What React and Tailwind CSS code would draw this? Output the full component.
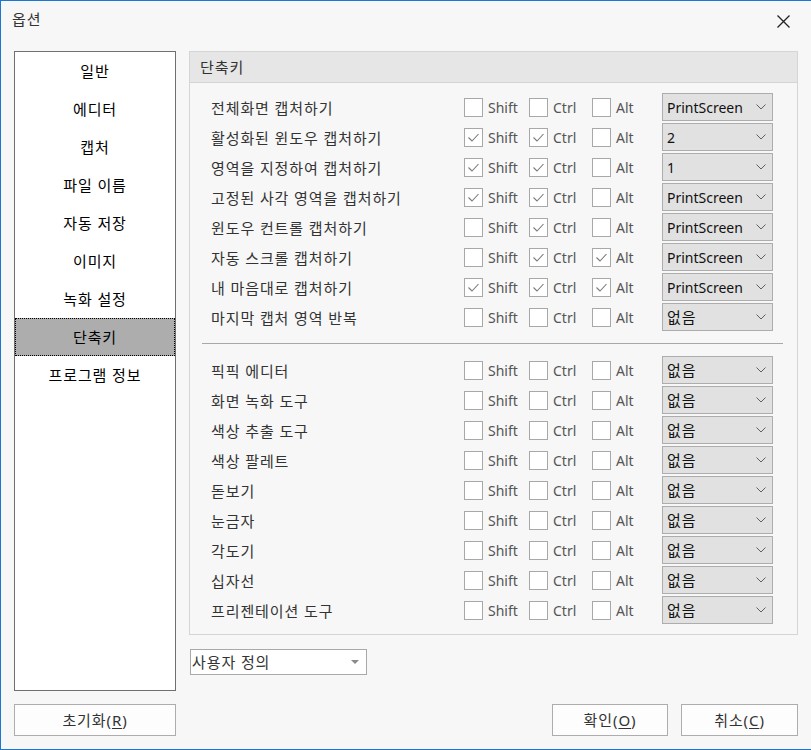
import React from "react";

const top = [
  ["전체화면 캡처하기", false, false, false, "PrintScreen"],
  ["활성화된 윈도우 캡처하기", true, true, false, "2"],
  ["영역을 지정하여 캡처하기", true, true, false, "1"],
  ["고정된 사각 영역을 캡처하기", true, true, false, "PrintScreen"],
  ["윈도우 컨트롤 캡처하기", false, true, false, "PrintScreen"],
  ["자동 스크롤 캡처하기", false, true, true, "PrintScreen"],
  ["내 마음대로 캡처하기", true, true, true, "PrintScreen"],
  ["마지막 캡처 영역 반복", false, false, false, "없음"],
];

const bottom = [
  "픽픽 에디터",
  "화면 녹화 도구",
  "색상 추출 도구",
  "색상 팔레트",
  "돋보기",
  "눈금자",
  "각도기",
  "십자선",
  "프리젠테이션 도구",
].map((l) => [l, false, false, false, "없음"]);

const menu = ["일반", "에디터", "캡처", "파일 이름", "자동 저장", "이미지", "녹화 설정", "단축키", "프로그램 정보"];

function Check({ checked }) {
  return (
    <div className="w-[19px] h-[19px] border border-[#a8a8a8] bg-white shrink-0 flex items-center justify-center">
      {checked && (
        <svg width="17" height="17" viewBox="0 0 17 17">
          <polyline points="3.5,8.5 7,12 13.5,5" fill="none" stroke="#7a7a7a" strokeWidth="1.1" />
        </svg>
      )}
    </div>
  );
}

function Opt({ checked, label, w }) {
  return (
    <div className={"flex items-center gap-[5px] " + w}>
      <Check checked={checked} />
      <span className="text-[#555] text-[14px] tracking-normal leading-[20px] pt-[2px]">{label}</span>
    </div>
  );
}

function Row({ r }) {
  const [label, s, c, a, key] = r;
  const latin = /^[A-Za-z0-9]/.test(key);
  return (
    <div className="h-[30px] flex items-center">
      <div className="w-[274px] pl-[21px] text-[#333] leading-[20px] whitespace-nowrap pt-[1px]">{label}</div>
      <Opt checked={s} label="Shift" w="w-[65px]" />
      <Opt checked={c} label="Ctrl" w="w-[63px]" />
      <Opt checked={a} label="Alt" w="w-[70px]" />
      <div className="w-[111px] h-[28px] border border-[#adadad] bg-[#e1e1e1] flex items-center justify-between pl-[4px] pr-[6px] text-[#111]">
        {latin ? (
          <span className="leading-[20px] text-[14px] tracking-normal pt-[2px]">{key}</span>
        ) : (
          <span className="leading-[20px]">{key}</span>
        )}
        <svg width="10" height="6" viewBox="0 0 10 6">
          <polyline points="0.5,0.5 5,5 9.5,0.5" fill="none" stroke="#606060" strokeWidth="1" />
        </svg>
      </div>
    </div>
  );
}

export default function App() {
  return (
    <div className="w-[811px] h-[750px] bg-[#f7f7f7] border-t border-l border-b border-[#1a78d2] flex flex-col font-['Noto_Sans','Noto_Sans_CJK_KR',sans-serif] text-[15px] tracking-[0.9px] text-[#333] overflow-hidden">
      <div className="h-[50px] flex items-start justify-between pl-[11px] pr-[21px]">
        <div className="pt-[8px] leading-[20px] text-[#333]">옵션</div>
        <svg className="mt-[14px]" width="13" height="13" viewBox="0 0 13 13">
          <path d="M0.5 0.5 L12.5 12.5 M12.5 0.5 L0.5 12.5" stroke="#222" strokeWidth="1.3" fill="none" />
        </svg>
      </div>
      <div className="h-[640px] flex pl-[13px]">
        <div className="w-[162px] h-[640px] border border-[#6f6f6f] bg-white flex flex-col">
          {menu.map((m) =>
            m === "단축키" ? (
              <div key={m} className="h-[38px] flex items-center justify-center bg-[#adadad] border border-dotted border-black text-black">
                {m}
              </div>
            ) : (
              <div key={m} className="h-[38px] flex items-center justify-center text-black">
                {m}
              </div>
            )
          )}
        </div>
        <div className="ml-[13px] w-[609px] flex flex-col">
          <div className="h-[584px] border border-[#d5d5d5] flex flex-col">
            <div className="h-[31px] bg-[#e6e6e6] border-b border-[#d5d5d5] pl-[10px] flex items-center text-[#333]">
              단축키
            </div>
            <div className="pt-[9px] flex flex-col">
              {top.map((r) => (
                <Row key={r[0]} r={r} />
              ))}
            </div>
            <div className="mt-[11px] mb-[11px] ml-[12px] mr-[14px] h-px bg-[#a8a8a8]" />
            <div className="flex flex-col">
              {bottom.map((r) => (
                <Row key={r[0]} r={r} />
              ))}
            </div>
          </div>
          <div className="mt-[14px] ml-[1px] w-[177px] h-[26px] border border-[#a9a9a9] bg-white flex items-center justify-between pl-[1px] pr-[7px]">
            <span className="leading-[20px] text-[#333]">사용자 정의</span>
            <svg width="8" height="4" viewBox="0 0 8 4">
              <polygon points="0,0 8,0 4,4" fill="#8a8a8a" />
            </svg>
          </div>
        </div>
      </div>
      <div className="mt-[13px] h-[32px] flex pl-[13px]">
        <div className="w-[162px] h-[32px] border border-[#adadad] bg-[#fdfdfd] flex items-center justify-center text-[#333]">
          초기화(<span className="underline underline-offset-2">R</span>)
        </div>
        <div className="ml-[376px] w-[116px] h-[32px] border border-[#adadad] bg-[#fdfdfd] flex items-center justify-center text-[#333]">
          확인(<span className="underline underline-offset-2">O</span>)
        </div>
        <div className="ml-[13px] w-[117px] h-[32px] border border-[#adadad] bg-[#fdfdfd] flex items-center justify-center text-[#333]">
          취소(<span className="underline underline-offset-2">C</span>)
        </div>
      </div>
    </div>
  );
}
